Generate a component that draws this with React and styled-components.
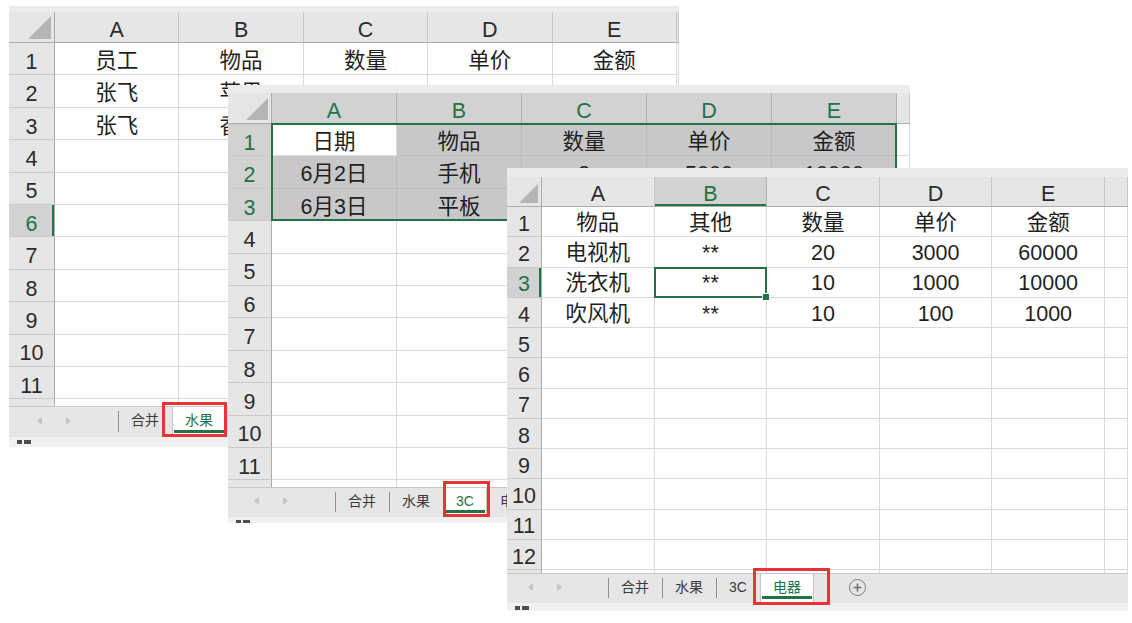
import React from 'react';
import styled, { createGlobalStyle, css } from 'styled-components';

const GREEN = '#217346';

const GlobalStyle = createGlobalStyle`
  html, body {
    margin: 0;
    padding: 0;
    background: #fff;
  }
  body {
    font-family: "Liberation Sans", "Noto Sans CJK SC", sans-serif;
  }
`;

const Desktop = styled.div`
  position: relative;
  width: 1132px;
  height: 623px;
  overflow: hidden;
  background: #fff;
`;

// each screenshot sits on the canvas like a window on a desktop
const Window = styled.div`
  position: absolute;
  left: ${(p) => p.$left}px;
  top: ${(p) => p.$top}px;
  width: ${(p) => p.$width}px;
  z-index: ${(p) => p.$z};
  display: flex;
  flex-direction: column;
  background: #fff;
`;

const TopStrip = styled.div`
  height: ${(p) => p.$h}px;
  background: #ececec;
`;

const Grid = styled.div`
  display: grid;
  grid-template-columns: ${(p) => p.$rowHeadW}px repeat(5, ${(p) => p.$colW}px) 1fr;
  grid-template-rows: ${(p) => p.$headH}px repeat(${(p) => p.$rows}, ${(p) => p.$rowH}px) ${(p) => p.$tail}px;
  font-size: 21.5px;
  line-height: 1;
  color: #1f1f1f;
`;

// excel puts text at the bottom of the cell
const place = css`
  grid-row: ${(p) => p.$r};
  grid-column: ${(p) => p.$c};
  box-sizing: border-box;
  display: flex;
  align-items: flex-end;
  justify-content: center;
  min-width: 0;
  overflow: hidden;
  white-space: nowrap;
`;

const Corner = styled.div`
  ${place}
  position: relative;
  background: #e6e6e6;
  border-right: 1px solid #ababab;
  border-bottom: 1px solid #ababab;

  &::after {
    content: '';
    position: absolute;
    right: 3px;
    bottom: 3px;
    width: ${(p) => p.$tri}px;
    height: ${(p) => p.$tri}px;
    background: #b5b5b5;
    clip-path: polygon(100% 0, 100% 100%, 0 100%);
  }
`;

const ColHead = styled.div`
  ${place}
  padding-bottom: 1px;
  background: ${(p) => (p.$sel ? '#d2d2d2' : '#e6e6e6')};
  color: ${(p) => (p.$sel ? GREEN : '#2b2b2b')};
  border-right: 1px solid ${(p) => (p.$sel ? '#b3b3b3' : '#c8c8c8')};
  border-bottom: 1px solid #ababab;
  ${(p) =>
    p.$active &&
    css`
      box-shadow: inset 0 -2px 0 ${GREEN};
    `}
`;

const RowHead = styled.div`
  ${place}
  padding-bottom: 1px;
  background: ${(p) => (p.$sel ? '#d2d2d2' : '#e6e6e6')};
  color: ${(p) => (p.$sel ? GREEN : '#2b2b2b')};
  border-right: 1px solid #ababab;
  border-bottom: ${(p) => (p.$tail ? 'none' : '1px solid #c8c8c8')};
  ${(p) =>
    p.$active &&
    css`
      box-shadow: inset -2px 0 0 ${GREEN};
    `}
`;

const Cell = styled.div`
  ${place}
  padding-bottom: 2px;
  background: ${(p) => (p.$shade ? '#c8c8c8' : '#fff')};
  border-right: 1px solid ${(p) => (p.$shade ? '#bcbcbc' : '#dadada')};
  border-bottom: ${(p) => (p.$tail ? 'none' : `1px solid ${p.$shade ? '#bcbcbc' : '#dadada'}`)};
`;

const SelBox = styled.div`
  grid-row: ${(p) => p.$rows};
  grid-column: ${(p) => p.$cols};
  position: relative;
  z-index: 2;
  margin: -1px 0 0 -1px;
  border: 2px solid ${GREEN};
  pointer-events: none;
`;

const FillHandle = styled.span`
  position: absolute;
  right: -5px;
  bottom: -5px;
  width: 6px;
  height: 6px;
  background: ${GREEN};
  border: 1px solid #fff;
`;

const TabBar = styled.div`
  height: ${(p) => p.$h}px;
  box-sizing: border-box;
  display: flex;
  align-items: stretch;
  background: #e6e6e6;
  border-top: 1px solid #c8c8c8;
  font-size: 14px;
  line-height: 1;
  color: #3a3a3a;
`;

const Nav = styled.div`
  width: ${(p) => p.$w}px;
  flex: none;
  display: flex;
  align-items: center;
  gap: 24px;
  padding: 0 0 3px ${(p) => p.$pad}px;
  box-sizing: border-box;
`;

const Arrow = styled.span`
  width: 0;
  height: 0;
  border-top: 4px solid transparent;
  border-bottom: 4px solid transparent;
  ${(p) =>
    p.$dir === 'left'
      ? css`border-right: 5px solid #c4c4c4;`
      : css`border-left: 5px solid #c4c4c4;`}
`;

const Tab = styled.div`
  position: relative;
  flex: none;
  display: flex;
  align-items: center;
  justify-content: center;
  padding: 0 13px 4px;
  white-space: nowrap;

  ${(p) =>
    p.$sep &&
    css`
      &::before {
        content: '';
        position: absolute;
        left: 0;
        top: 4px;
        bottom: 5px;
        width: 1px;
        background: #8f8f8f;
      }
    `}

  ${(p) =>
    p.$active &&
    css`
      background: #fff;
      color: ${GREEN};
      box-shadow: inset 1px 0 0 #c4c4c4, inset -1px 0 0 #c4c4c4;

      &::after {
        content: '';
        position: absolute;
        left: 2px;
        right: 2px;
        bottom: 4px;
        height: 3px;
        background: ${GREEN};
      }
    `}
`;

const Mark = styled.span`
  position: absolute;
  left: ${(p) => p.$m.l}px;
  right: ${(p) => p.$m.r}px;
  top: ${(p) => p.$m.t}px;
  bottom: ${(p) => p.$m.b}px;
  border: 3px solid #ec3237;
  z-index: 3;
  pointer-events: none;
`;

const PlusBtn = styled.span`
  align-self: center;
  margin: 0 0 3px 35px;
  width: 17px;
  height: 17px;
  box-sizing: border-box;
  border: 1.5px solid #7a7a7a;
  border-radius: 50%;
  display: flex;
  align-items: center;
  justify-content: center;
`;

const StatusBar = styled.div`
  height: ${(p) => p.$h}px;
  background: #f1f1f1;
  display: flex;
  align-items: flex-start;
  gap: 2px;
  padding: 3px 0 0 8px;
  box-sizing: border-box;
  overflow: hidden;
`;

const StatusDot = styled.span`
  width: ${(p) => p.$w}px;
  height: 4px;
  background: #4d4d4d;
`;

const LETTERS = ['A', 'B', 'C', 'D', 'E'];

const inRange = (rg, r, c) => rg && r >= rg.r1 && r <= rg.r2 && c >= rg.c1 && c <= rg.c2;

function Sheet({ cfg }) {
  const cells = [];
  cells.push(<Corner key="corner" $r={1} $c={1} $tri={cfg.tri} />);
  LETTERS.forEach((l, i) => {
    cells.push(
      <ColHead
        key={`h${l}`}
        $r={1}
        $c={i + 2}
        $sel={cfg.selCols.includes(i + 1)}
        $active={cfg.activeCol === i + 1}
      >
        {l}
      </ColHead>
    );
  });
  cells.push(<ColHead key="hx" $r={1} $c={7} />);

  for (let r = 1; r <= cfg.rows; r++) {
    cells.push(
      <RowHead
        key={`r${r}`}
        $r={r + 1}
        $c={1}
        $sel={cfg.selRows.includes(r)}
        $active={cfg.activeRow === r}
      >
        {r}
      </RowHead>
    );
    for (let c = 1; c <= 5; c++) {
      const shade =
        inRange(cfg.range, r, c) && !(cfg.anchor && cfg.anchor.r === r && cfg.anchor.c === c);
      cells.push(
        <Cell key={`c${r}-${c}`} $r={r + 1} $c={c + 1} $shade={shade}>
          {cfg.data[r - 1] ? cfg.data[r - 1][c - 1] : ''}
        </Cell>
      );
    }
    cells.push(<Cell key={`x${r}`} $r={r + 1} $c={7} />);
  }

  const tailRow = cfg.rows + 2;
  cells.push(<RowHead key="tail" $r={tailRow} $c={1} $tail />);
  for (let c = 2; c <= 7; c++) cells.push(<Cell key={`t${c}`} $r={tailRow} $c={c} $tail />);

  return (
    <Window $left={cfg.left} $top={cfg.top} $width={cfg.width} $z={cfg.z}>
      <TopStrip $h={cfg.strip} />
      <Grid
        $rowHeadW={cfg.rowHeadW}
        $colW={cfg.colW}
        $headH={cfg.headH}
        $rows={cfg.rows}
        $rowH={cfg.rowH}
        $tail={cfg.tail}
      >
        {cells}
        {cfg.range && (
          <SelBox
            $rows={`${cfg.range.r1 + 1} / ${cfg.range.r2 + 2}`}
            $cols={`${cfg.range.c1 + 1} / ${cfg.range.c2 + 2}`}
          />
        )}
        {cfg.cursor && (
          <SelBox $rows={`${cfg.cursor.r + 1}`} $cols={`${cfg.cursor.c + 1}`}>
            <FillHandle />
          </SelBox>
        )}
      </Grid>
      <TabBar $h={cfg.tabH}>
        <Nav $w={cfg.nav.w} $pad={cfg.nav.pad}>
          <Arrow $dir="left" />
          <Arrow $dir="right" />
        </Nav>
        {cfg.tabs.map((t, i) => {
          const active = i === cfg.activeTab;
          const sep = !active && i - 1 !== cfg.activeTab;
          return (
            <Tab key={t} $active={active} $sep={sep}>
              {t}
              {active && <Mark $m={cfg.mark} />}
            </Tab>
          );
        })}
        {cfg.plus && (
          <PlusBtn>
            <svg width="9" height="9" viewBox="0 0 9 9">
              <path d="M4.5 0.5v8M0.5 4.5h8" stroke="#6f6f6f" strokeWidth="1.6" />
            </svg>
          </PlusBtn>
        )}
      </TabBar>
      <StatusBar $h={cfg.statusH}>
        <StatusDot $w={5} />
        <StatusDot $w={7} />
      </StatusBar>
    </Window>
  );
}

const TABS = ['合并', '水果', '3C', '电器'];

const sheets = [
  {
    left: 9,
    top: 6,
    width: 670,
    z: 1,
    strip: 6,
    headH: 31,
    rowHeadW: 46,
    colW: 124.4,
    rowH: 32.4,
    rows: 11,
    tail: 7,
    tabH: 31,
    statusH: 10,
    tri: 23,
    data: [
      ['员工', '物品', '数量', '单价', '金额'],
      ['张飞', '苹果', '5', '8', '40'],
      ['张飞', '香蕉', '3', '6', '18'],
    ],
    selCols: [],
    selRows: [6],
    activeRow: 6,
    tabs: TABS,
    activeTab: 1,
    nav: { w: 109, pad: 28 },
    mark: { l: -10, r: -1, t: -5, b: 0 },
  },
  {
    left: 228,
    top: 85,
    width: 682,
    z: 2,
    strip: 8,
    headH: 31,
    rowHeadW: 44,
    colW: 125,
    rowH: 32.4,
    rows: 11,
    tail: 7,
    tabH: 30,
    statusH: 6,
    tri: 22,
    data: [
      ['日期', '物品', '数量', '单价', '金额'],
      ['6月2日', '手机', '2', '5000', '10000'],
      ['6月3日', '平板', '1', '3000', '3000'],
    ],
    selCols: [1, 2, 3, 4, 5],
    selRows: [1, 2, 3],
    range: { r1: 1, r2: 3, c1: 1, c2: 5 },
    anchor: { r: 1, c: 1 },
    tabs: TABS,
    activeTab: 2,
    nav: { w: 107, pad: 26 },
    mark: { l: 0, r: -3, t: -7, b: 0 },
  },
  {
    left: 507,
    top: 168,
    width: 621,
    z: 3,
    strip: 9,
    headH: 30,
    rowHeadW: 35,
    colW: 112.6,
    rowH: 30.25,
    rows: 12,
    tail: 3,
    tabH: 30,
    statusH: 8,
    tri: 19,
    data: [
      ['物品', '其他', '数量', '单价', '金额'],
      ['电视机', '**', '20', '3000', '60000'],
      ['洗衣机', '**', '10', '1000', '10000'],
      ['吹风机', '**', '10', '100', '1000'],
    ],
    selCols: [2],
    activeCol: 2,
    selRows: [3],
    activeRow: 3,
    cursor: { r: 3, c: 2 },
    tabs: TABS,
    activeTab: 3,
    nav: { w: 101, pad: 21 },
    mark: { l: -7, r: -16, t: -6, b: -2 },
    plus: true,
  },
];

const App = () => (
  <>
    <GlobalStyle />
    <Desktop>
      {sheets.map((s) => (
        <Sheet key={s.left} cfg={s} />
      ))}
    </Desktop>
  </>
);

export default App;
